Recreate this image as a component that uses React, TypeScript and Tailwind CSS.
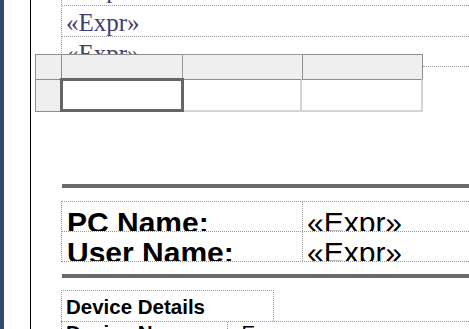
import React from "react";

const serif = { fontFamily: '"Liberation Serif", "Times New Roman", serif' };
const sans = { fontFamily: '"Liberation Sans", Arial, sans-serif' };

export default function App() {
  return (
    <div className="relative flex w-[469px] h-[329px] overflow-hidden bg-white">
      <div className="w-[4px] shrink-0 bg-[#2f4a6a]" />
      <div className="w-[26px] shrink-0 bg-white" />
      <div className="w-[1px] shrink-0 bg-black" />
      <div className="flex-1 min-w-0 pl-[30px] flex flex-col">
        {/* Expression rows */}
        <div className="w-[440px] shrink-0 border-l border-dotted border-[#9a9a9a]">
          <div className="h-[5px] overflow-hidden">
            <div className="mt-[-25px] pl-[4px] text-[25px] leading-[30px] text-[#3f3f6e]" style={serif}>
              «Expr»
            </div>
          </div>
          <div className="h-[31px] overflow-hidden border-t border-dotted border-[#9a9a9a]">
            <div className="pt-[2px] pl-[4px] text-[25px] leading-[30px] text-[#3f3f6e]" style={serif}>
              «Expr»
            </div>
          </div>
          <div className="h-[31px] overflow-hidden border-t border-b border-dotted border-[#9a9a9a]">
            <div className="pt-[2px] pl-[4px] text-[25px] leading-[30px] text-[#3f3f6e]" style={serif}>
              «Expr»
            </div>
          </div>
        </div>

        <div className="mt-[117px] ml-[1px] h-[4px] shrink-0 bg-[#6b6b6b]" />

        {/* PC / User table */}
        <div className="mt-[13px] w-[440px] shrink-0 border-t border-l border-dotted border-[#9a9a9a]" style={sans}>
          {["PC Name:", "User Name:"].map((label) => (
            <div key={label} className="flex h-[30px] border-b border-dotted border-[#9a9a9a]">
              <div className="w-[241px] shrink-0 overflow-hidden border-r border-dotted border-[#9a9a9a]">
                <div className="pt-[4px] pl-[5px] text-[30px] font-bold leading-[34px] text-black whitespace-nowrap">
                  {label}
                </div>
              </div>
              <div className="flex-1 overflow-hidden">
                <div className="pt-[4px] pl-[4px] text-[30px] leading-[34px] text-black whitespace-nowrap">
                  «Expr»
                </div>
              </div>
            </div>
          ))}
        </div>

        <div className="mt-[12px] ml-[1px] h-[4px] shrink-0 bg-[#6b6b6b]" />

        {/* Device details */}
        <div className="mt-[12px] w-[213px] h-[31px] shrink-0 overflow-hidden border-t border-l border-r border-dotted border-[#9a9a9a]" style={sans}>
          <div className="pt-[4px] pl-[4px] text-[20.5px] font-bold leading-[24px] text-black whitespace-nowrap">
            Device Details
          </div>
        </div>
        <div className="flex w-[440px] h-[30px] shrink-0 border-t border-l border-dotted border-[#9a9a9a]" style={sans}>
          <div className="w-[166px] shrink-0 overflow-hidden border-r border-dotted border-[#9a9a9a]">
            <div className="pl-[4px] text-[20.5px] font-bold leading-[22px] text-black whitespace-nowrap">
              Device Name:
            </div>
          </div>
          <div className="flex-1 overflow-hidden">
            <div className="pl-[2px] text-[20.5px] leading-[22px] text-black whitespace-nowrap">
              «Expr»
            </div>
          </div>
        </div>
      </div>

      {/* Floating grid overlay */}
      <div className="absolute left-[35px] top-[54px] w-[388px] h-[58px]">
        <div className="grid grid-cols-[26px_121px_120px_121px] grid-rows-[25px_33px] w-full h-full">
          <div className="bg-[#efefef] border-t border-l border-[#8e8e8e]" />
          <div className="bg-[#efefef] border-t border-l border-[#8e8e8e]" />
          <div className="bg-[#efefef] border-t border-l border-[#9a9a9a]" />
          <div className="bg-[#efefef] border-t border-l border-r border-[#8e8e8e]" />
          <div className="bg-[#efefef] border-t border-l border-b border-[#8e8e8e]" />
          <div className="bg-white border-[3px] border-[#666666] ml-[-1px] mt-[-1px] w-[124px] h-[34px] relative z-10" />
          <div className="bg-white border-b-2 border-r-2 border-t border-[#d4d4d4] border-t-[#8e8e8e]" />
          <div className="bg-white border-b-2 border-r-2 border-t border-[#d4d4d4] border-t-[#8e8e8e]" />
        </div>
      </div>
      {/* dotted line continuing right of grid */}
      <div className="absolute left-[423px] top-[66px] w-[46px] border-t border-dotted border-[#9a9a9a]" />
    </div>
  );
}
